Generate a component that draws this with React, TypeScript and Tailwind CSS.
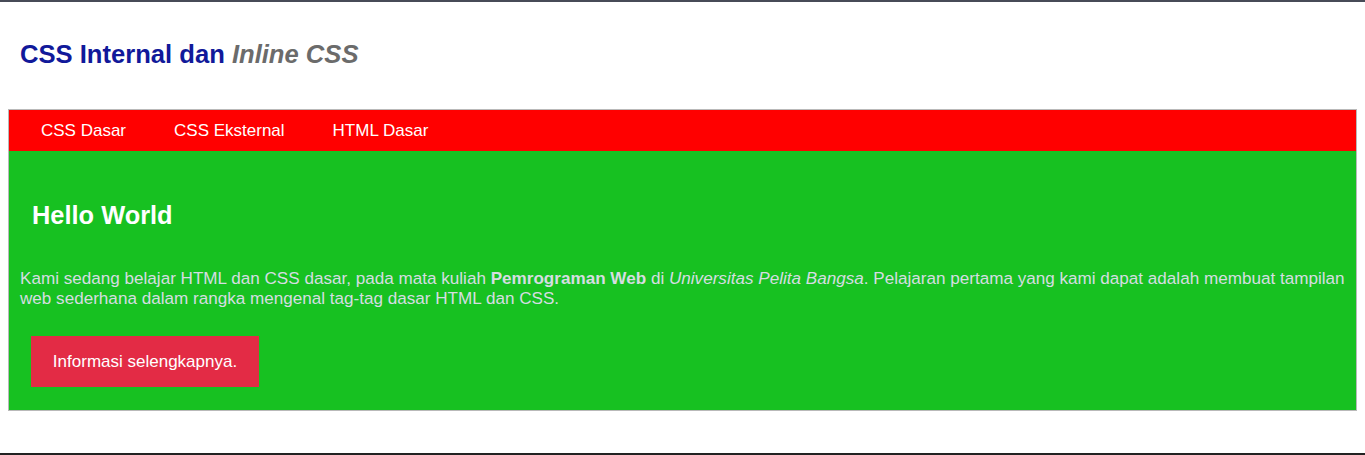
import React from 'react';

const links = ['CSS Dasar', 'CSS Eksternal', 'HTML Dasar'];

const App: React.FC = () => {
  return (
    <div className="h-[455px] flex flex-col border-t-2 border-b-2 border-t-[#474b57] border-b-[#222] bg-white font-['Liberation_Sans',Arial,sans-serif]">
      {/* Header */}
      <header className="pt-[37px] pl-[20px] h-[107px]">
        <h1 className="text-[25.6px] leading-[30px] font-bold text-[#11199a]">
          CSS Internal dan <i className="text-[#6b6b6b]">Inline CSS</i>
        </h1>
      </header>

      {/* Main box */}
      <div className="mx-[8px] border border-[#b9b9b9]">
        <nav className="flex bg-[#ff0000] h-[41px] items-center pl-[8px]">
          {links.map(l => (
            <a key={l} href="#" className="px-[24px] text-[17px] text-white">
              {l}
            </a>
          ))}
        </nav>
        <section className="bg-[#17c121] pt-[49px] px-[11px] pb-[23px]">
          <h2 className="pl-[12px] text-[25.4px] leading-[30px] font-bold text-white">Hello World</h2>
          <p className="mt-[39px] text-[17.1px] leading-[20px] text-[#d6dde1]">
            Kami sedang belajar HTML dan CSS dasar, pada mata kuliah <b>Pemrograman Web</b> di{' '}
            <i>Universitas Pelita Bangsa</i>. Pelajaran pertama yang kami dapat adalah membuat tampilan web
            sederhana dalam rangka mengenal tag-tag dasar HTML dan CSS.
          </p>
          <a
            href="#"
            className="mt-[27px] ml-[11px] flex items-center justify-center w-[228px] h-[51px] bg-[#e32b45] text-white text-[17px]"
          >
            Informasi selengkapnya.
          </a>
        </section>
      </div>
    </div>
  );
};

export default App;
